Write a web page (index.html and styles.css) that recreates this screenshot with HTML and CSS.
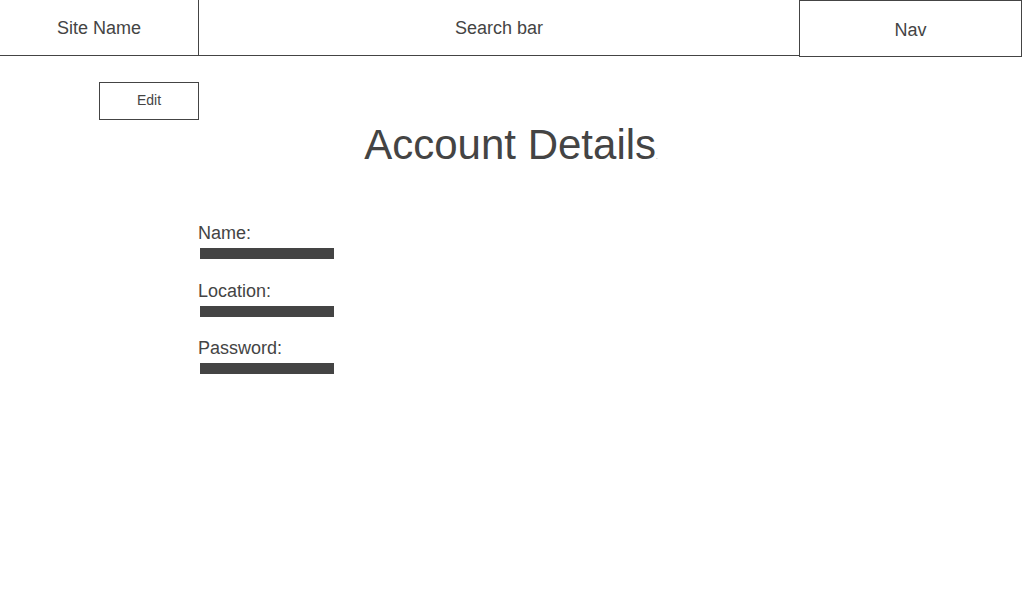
FILE: index.html
```html
<!DOCTYPE html>
<html lang="en">
<head>
<meta charset="utf-8">
<title>Account Details</title>
<link rel="stylesheet" href="styles.css">
</head>
<body>
<header class="topbar">
  <div class="site-name">Site Name</div>
  <div class="search">Search bar</div>
  <div class="nav">Nav</div>
</header>
<main class="content">
  <div class="edit-row"><button class="edit">Edit</button></div>
  <h1 class="title">Account Details<span class="dot">.</span></h1>
  <section class="fields">
    <div class="field">
      <div class="label">Name:</div>
      <div class="bar"></div>
    </div>
    <div class="field">
      <div class="label">Location:</div>
      <div class="bar"></div>
    </div>
    <div class="field">
      <div class="label">Password:</div>
      <div class="bar"></div>
    </div>
  </section>
</main>
</body>
</html>
```

FILE: styles.css
```css
* { box-sizing: border-box; }
html, body { margin: 0; padding: 0; background: #fff; }
body {
  font-family: "Liberation Sans", Arial, sans-serif;
  color: #444;
  width: 1022px;
}
.topbar {
  display: flex;
  align-items: flex-start;
  height: 57px;
}
.site-name {
  width: 199px;
  height: 56px;
  border-right: 1px solid #444;
  border-bottom: 1px solid #444;
  display: flex;
  align-items: center;
  justify-content: center;
  font-size: 18px;
  padding-top: 2px;
}
.search {
  width: 600px;
  height: 56px;
  border-bottom: 1px solid #444;
  display: flex;
  align-items: center;
  justify-content: center;
  font-size: 18px;
  padding-top: 2px;
}
.nav {
  width: 223px;
  height: 57px;
  border: 1px solid #444;
  display: flex;
  align-items: center;
  justify-content: center;
  font-size: 18px;
  padding-top: 4px;
}
.content {
  padding-top: 25px;
}
.edit-row {
  padding-left: 99px;
}
.edit {
  width: 100px;
  height: 38px;
  border: 1px solid #444;
  background: #fff;
  color: #444;
  font-family: "Liberation Sans", Arial, sans-serif;
  font-size: 14px;
  padding: 0 0 2px;
  display: block;
}
.title {
  margin: 5px 0 0;
  font-size: 42px;
  font-weight: normal;
  line-height: 40px;
  text-align: center;
}
.dot {
  font-size: 6px;
}
.fields {
  margin-top: 46px;
  padding-left: 198px;
  display: flex;
  flex-direction: column;
  gap: 21.5px;
}
.field {
  display: flex;
  flex-direction: column;
}
.label {
  font-size: 18px;
  line-height: 20px;
}
.bar {
  margin: 5px 0 0 2px;
  width: 134px;
  height: 11px;
  background: #444;
}
```
